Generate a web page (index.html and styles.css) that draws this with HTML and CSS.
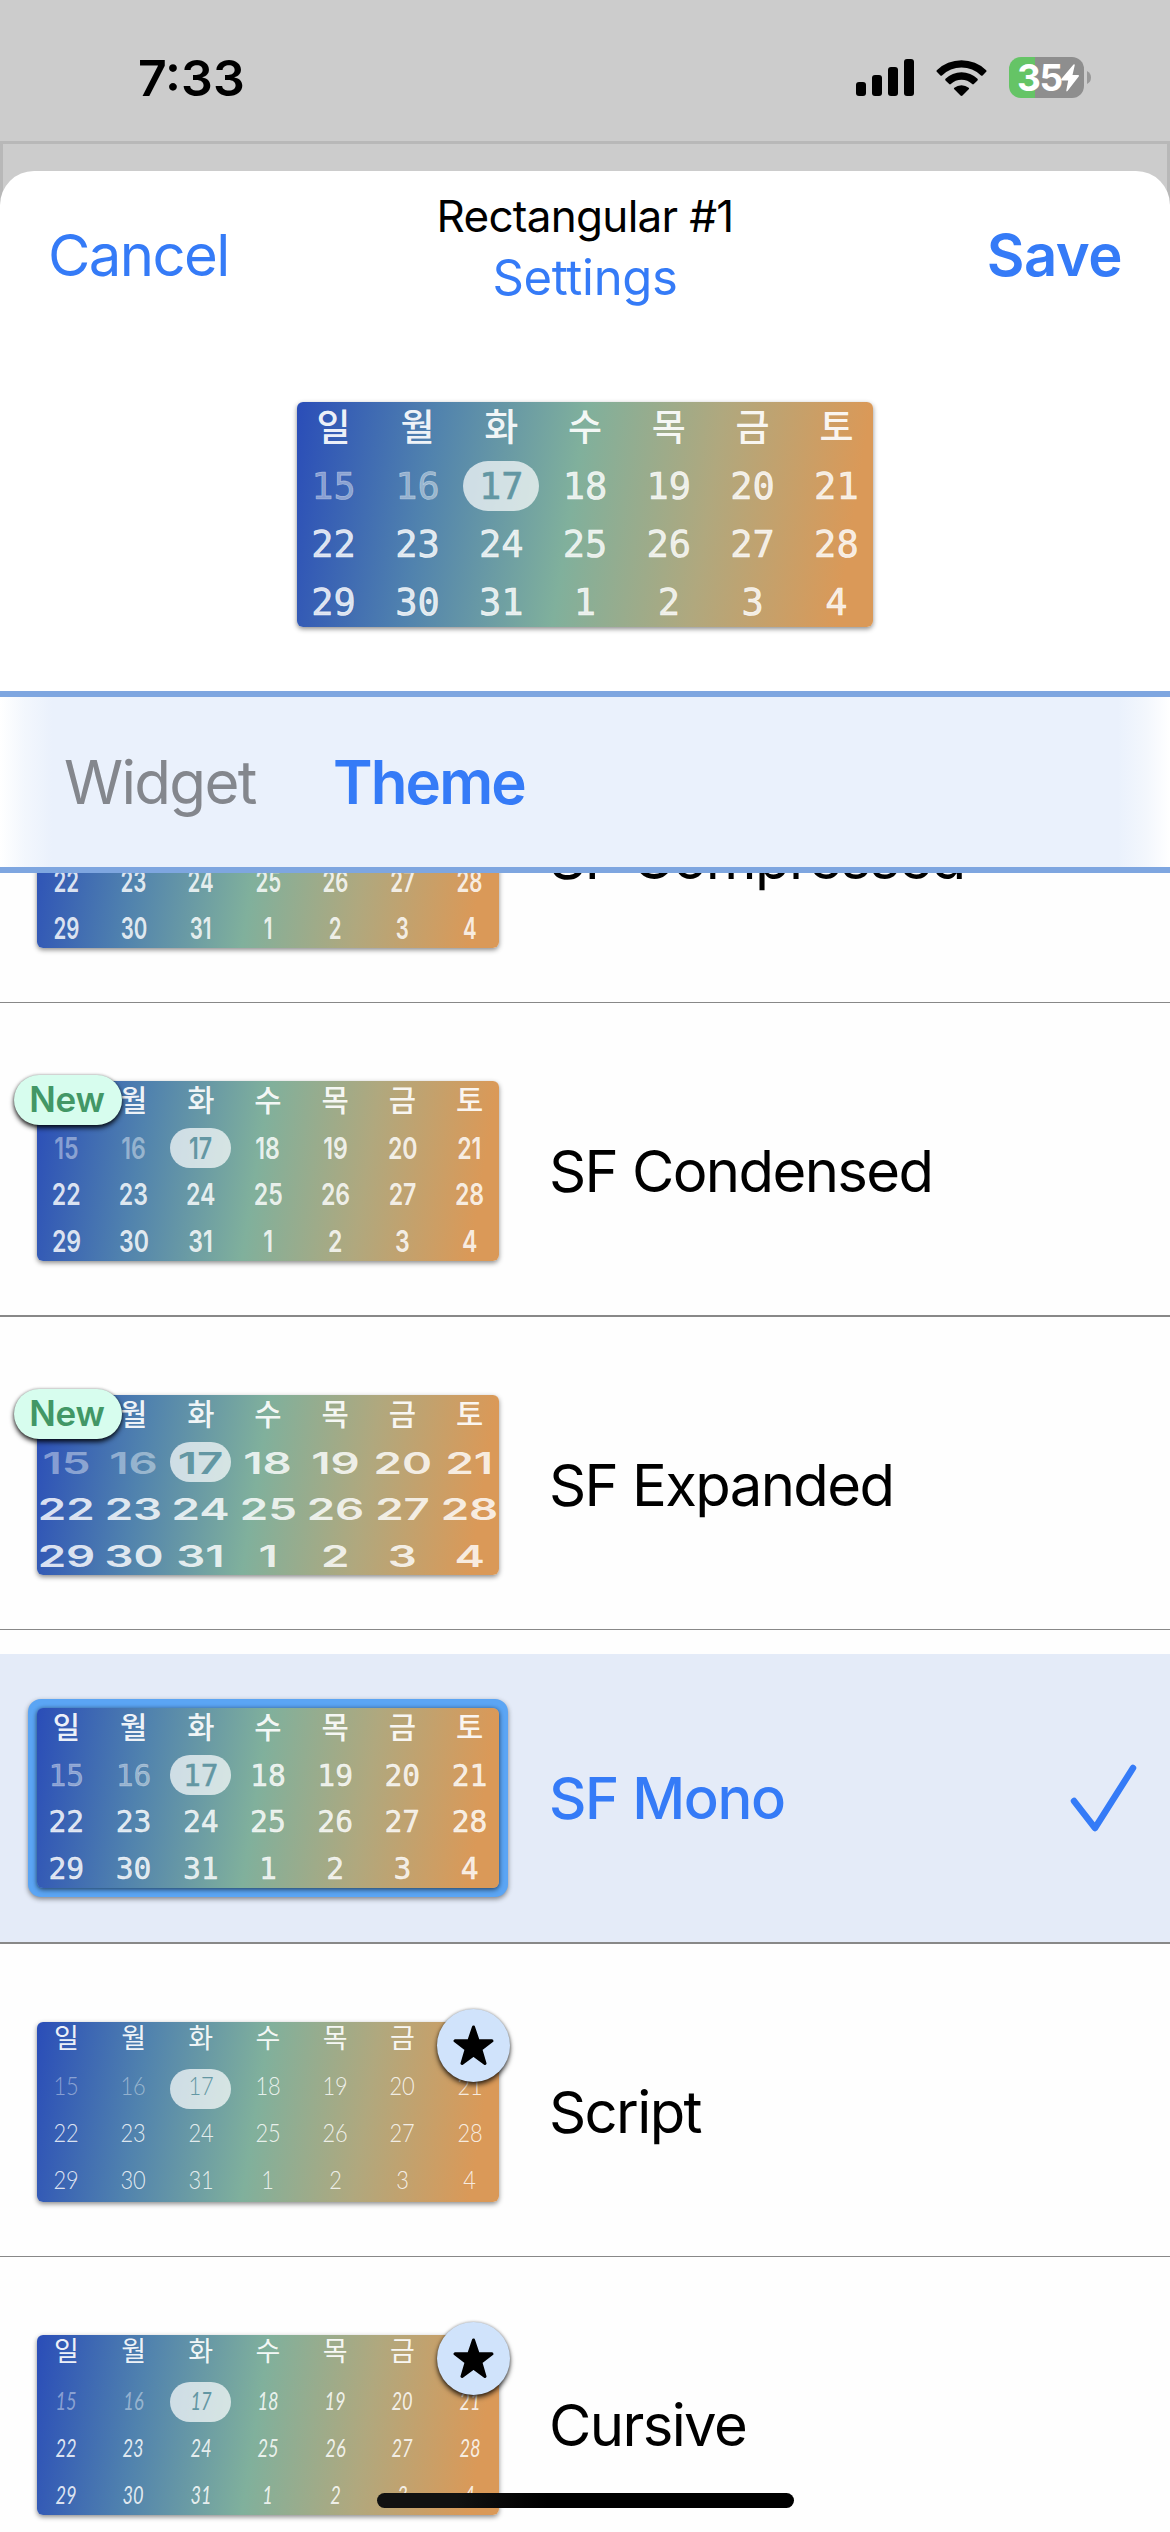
FILE: index.html
```html
<!DOCTYPE html>
<html lang="en">
<head>
<meta charset="utf-8">
<title>Rectangular #1</title>
<link rel="stylesheet" href="styles.css">
</head>
<body>
<div class="screen">
  <header class="status">
    <span class="clock">7:33</span>
    <div class="indicators">
      <svg class="signal" viewBox="0 0 58 37"><rect x="0" y="23" width="10" height="14" rx="3"/><rect x="16" y="16" width="10" height="21" rx="3"/><rect x="32" y="8" width="10" height="29" rx="3"/><rect x="48" y="0" width="10" height="37" rx="3"/></svg>
      <svg class="wifi" viewBox="0 0 51 37"><path d="M0.8 11.2a35.5 35.5 0 0 1 49.4 0q.7.8 0 1.6l-3.6 3.6q-.8.7-1.6 0a28 28 0 0 0-39 0q-.8.7-1.6 0l-3.6-3.6q-.7-.8 0-1.6z"/><path d="M9.5 19.8a23 23 0 0 1 32 0q.7.8 0 1.6l-3.7 3.7q-.8.7-1.6 0a15.500 15.500 0 0 0-21.400 0q-.8.7-1.6 0l-3.700-3.700q-.7-.8 0-1.600z"/><path d="M18.300 28.700a11.500 11.500 0 0 1 14.400 0q.8.8 0 1.600l-6.200 6.200q-1 .9-2 0l-6.200-6.200q-.8-.8 0-1.600z"/></svg>
      <div class="battery">
        <div class="battery-body"><span class="battery-level">35</span><svg class="bolt" viewBox="0 0 18 28"><path d="M12.500.5Q14-.3 13.700 1.500L11.500 11h5.500q1.600.2.7 1.600L6.500 27q-1.300 1-1.200-.6L7.200 16.500H1Q-.5 16.200.5 14.800z"/></svg></div>
        <svg class="battery-cap" viewBox="0 0 4 13"><path d="M0 0q4 2 4 6.500T0 13z"/></svg>
      </div>
    </div>
  </header>

  <div class="backdrop">
    <main class="sheet">
      <nav class="navbar">
        <a class="nav-action"><span class="cancel">Cancel</span></a>
        <div class="titles"><span class="title">Rectangular #1</span><a class="settings">Settings</a></div>
        <a class="nav-action nav-save"><span class="save">Save</span></a>
      </nav>
      <div class="preview"><div class="calendar calendar-large mono"></div></div>

      <div class="tabs"><span class="tab widget">Widget</span><span class="tab theme">Theme</span></div>

      <div class="list">
        <section class="row">
          <div class="thumb"><div class="calendar compressed"></div></div>
          <span class="name">SF Compressed</span>
        </section>
        <section class="row">
          <div class="thumb"><div class="calendar condensed"></div><span class="new">New</span></div>
          <span class="name">SF Condensed</span>
        </section>
        <section class="row">
          <div class="thumb"><div class="calendar expanded"></div><span class="new">New</span></div>
          <span class="name">SF Expanded</span>
        </section>
        <section class="row selected">
          <div class="thumb ring"><div class="calendar mono"></div></div>
          <span class="name">SF Mono</span>
          <svg class="check" viewBox="0 0 68 68"><path d="M5 37L26 64L64 4"/></svg>
        </section>
        <section class="row">
          <div class="thumb"><div class="calendar script"></div><span class="star"><svg viewBox="0 0 40 40"><path d="M20 2l4.600 13.500H38L27.200 23.800 31.200 37.500 20 29.300 8.800 37.500 12.800 23.800 2 15.500H15.400z"/></svg></span></div>
          <span class="name">Script</span>
        </section>
        <section class="row">
          <div class="thumb"><div class="calendar cursive"></div><span class="star"><svg viewBox="0 0 40 40"><path d="M20 2l4.600 13.500H38L27.200 23.800 31.200 37.500 20 29.300 8.800 37.500 12.800 23.800 2 15.500H15.400z"/></svg></span></div>
          <span class="name">Cursive</span>
        </section>
      </div>
    </main>
  </div>
  <div class="home-indicator"></div>
</div>
<script src="calendar.js"></script>
</body>
</html>
```

FILE: styles.css
```css
* { box-sizing: border-box; }
body { margin: 0; font-family: Inter, "Noto Sans CJK KR", sans-serif; color: #000; }
.screen { position: relative; width: 1170px; height: 2532px; overflow: hidden; background: #ccc; display: flex; flex-direction: column; }

/* status bar */
.status { height: 141px; flex: none; display: flex; justify-content: space-between; align-items: flex-start; padding: 57px 79px 0 138px; }
.clock { font-size: 50px; line-height: 42px; font-weight: 600; letter-spacing: 0; }
.indicators { display: flex; align-items: center; height: 41px; }
.signal { width: 58px; height: 37px; margin-right: 22px; }
.wifi { width: 51px; height: 37px; margin-right: 22px; }
.battery { display: flex; align-items: center; gap: 3px; }
.battery-body { width: 75px; height: 41px; border-radius: 12px; background: linear-gradient(90deg, #65c466 26px, #8e8e8e 26px); color: #fff; display: flex; align-items: center; padding-left: 8px; gap: 1px; }
.battery-level { font-size: 37px; line-height: 41px; font-weight: 700; letter-spacing: -1.500px; width: 43px; }
.bolt { width: 18px; height: 28px; fill: #fff; }
.battery-cap { width: 4px; height: 13px; fill: #999; }

/* sheet */
.backdrop { flex: 1; border: 3px solid #b8b8b8; border-bottom: 0; padding-top: 27px; }
.sheet { width: 1170px; height: 2361px; margin-left: -3px; background: #fff; border-radius: 34px 34px 0 0; display: flex; flex-direction: column; }
.navbar { height: 169px; flex: none; display: grid; grid-template-columns: 1fr 400px 1fr; align-items: center; padding: 0 48px; color: #357bf7; }
.nav-action { font-size: 58px; line-height: 70px; letter-spacing: -1.600px; margin-bottom: 1px; }
.nav-save { text-align: right; font-weight: 600; letter-spacing: -.5px; }
.titles { display: flex; flex-direction: column; align-items: center; margin-bottom: 18px; }
.titles > * { line-height: 61px; white-space: nowrap; }
.title { font-size: 44px; letter-spacing: -.7px; color: #000; }
.settings { font-size: 49px; letter-spacing: -.3px; }
.preview { height: 351px; flex: none; display: flex; justify-content: center; padding-top: 62px; }

/* segmented tabs */
.tabs { position: relative; z-index: 1; height: 182px; flex: none; border: solid #7ea6e0; border-width: 6px 0; display: flex; align-items: center; background: linear-gradient(90deg, #fff, #f3f7fd 24px, #eaf1fc 52px, #eaf1fc 1118px, #f3f7fd 1146px, #fff); }
.tab { font-size: 60px; line-height: 72px; }
.widget { width: 269px; margin-left: 64px; letter-spacing: -1.700px; color: #84878d; }
.theme { color: #357bf7; font-weight: 600; letter-spacing: -1.900px; }

/* theme list */
.list { flex: 1; min-height: 0; overflow: hidden; display: flex; flex-direction: column; background: #fefefe; }
.row { height: 313px; flex: none; padding: 24px 0 0 37px; border-bottom: 1px solid #888; display: flex; align-items: center; }
.row:nth-child(even) { height: 314px; border-bottom-width: 2px; }
.row:first-child { margin-top: -183px; }
.name { margin-left: 50px; font-size: 58px; line-height: 70px; letter-spacing: -1.600px; white-space: nowrap; }
.selected { background: linear-gradient(#fefefe 24px, #e4ebf8 24px); color: #357bf7; font-weight: 500; }
.check { width: 68px; height: 68px; margin-left: auto; margin-right: 33px; fill: none; stroke: #357bf7; stroke-width: 6.500px; stroke-linecap: round; stroke-linejoin: round; }
.thumb { position: relative; flex: none; }
.ring { border: 9px solid #5ba5f4; background: #5ba5f4; border-radius: 13px; margin: -9px; box-shadow: 0 2px 5px rgba(0,0,0,.45); }
.ring .calendar { box-shadow: 0 2px 5px rgba(0,0,0,.45), 0 0 4px rgba(0,0,0,.25); }
.ring + .name { letter-spacing: -1.300px; }
.new { position: absolute; left: -23px; top: -6px; width: 108px; height: 50px; border-radius: 25px; background: #d7fdee; color: #429766; font-size: 35px; line-height: 49px; font-weight: 600; letter-spacing: -.2px; padding-right: 2px; text-align: center; box-shadow: 0 3px 5px rgba(0,0,0,.85), 0 0 3px rgba(0,0,0,.3); }
.star { position: absolute; right: -11px; top: -13px; width: 73px; height: 73px; border-radius: 50%; background: #d0e3fb; display: flex; align-items: center; justify-content: center; box-shadow: 0 3px 5px rgba(0,0,0,.75), 0 0 3px rgba(0,0,0,.3); }
.star svg { width: 41px; height: 41px; stroke: #000; stroke-width: 3; stroke-linejoin: round; }

/* calendar widget */
.calendar { --u: .802px; --sx: 1; --dy: 0px; --hy: -2px; width: calc(576 * var(--u)); height: calc(225 * var(--u)); border-radius: 6px; background: linear-gradient(99deg, #2a4db8, #5082ae 23%, #80b09c 47.500%, #b0a87e 70%, #da9958 94%); box-shadow: 0 2px 5px rgba(0,0,0,.45); display: grid; grid-template-columns: repeat(7, calc(83.800 * var(--u))); grid-template-rows: calc(55.500 * var(--u)) calc(57.500 * var(--u)) calc(58.600 * var(--u)) calc(58.600 * var(--u)); justify-content: center; color: rgba(255,255,255,.84); font-size: calc(36.500 * var(--u)); font-weight: 600; }
.calendar-large { --u: 1px; }
.cell { display: flex; align-items: center; justify-content: center; }
.digits { transform: translateY(var(--dy)) scaleX(var(--sx)); }
.weekday { font-family: "Noto Sans CJK KR", sans-serif; font-size: calc(37 * var(--u)); font-weight: 500; color: rgba(255,255,255,.93); padding-bottom: calc(5 * var(--u)); line-height: 1; }
.weekday .digits { transform: translateY(var(--hy)); }
.past { color: rgba(255,255,255,.42); }
.today { display: grid; place-items: center; place-content: center; color: #6397a3; }
.today::before { content: ""; grid-area: 1 / 1; width: calc(76.500 * var(--u)); height: calc(50 * var(--u)); border-radius: calc(25 * var(--u)); background: rgba(255,255,255,.7); }
.today .digits { grid-area: 1 / 1; }
.mono { font-family: "DejaVu Sans Mono", monospace; font-size: calc(37 * var(--u)); font-weight: 400; -webkit-text-stroke: calc(.6 * var(--u)) currentColor; }
.mono .weekday { -webkit-text-stroke: 0; }
.compressed { --sx: .7; }
.condensed { --sx: .79; }
.expanded { --sx: 1.560; --dy: 1px; }
.script { --sx: .84; --dy: -4.500px; --hy: -6px; font-family: Lato, sans-serif; font-weight: 300; font-size: 26px; }
.script .weekday, .cursive .weekday { font-weight: 400; font-size: 27px; }
.cursive { --sx: .7; --dy: -2.500px; --hy: -6px; font-family: Lato, sans-serif; font-style: italic; font-weight: 400; font-size: 26px; }
.cursive .weekday { font-style: normal; }

.home-indicator { position: absolute; left: 377px; top: 2493px; width: 417px; height: 15px; border-radius: 8px; background: linear-gradient(90deg, #111 80px, #000 170px); }
```

FILE: calendar.js
```js
const weekdays = ["일", "월", "화", "수", "목", "금", "토"];
const days = [15, 16, 17, 18, 19, 20, 21, 22, 23, 24, 25, 26, 27, 28, 29, 30, 31, 1, 2, 3, 4];

function cell(text, kind) {
  return `<div class="cell ${kind}"><span class="digits">${text}</span></div>`;
}

const html =
  weekdays.map((d) => cell(d, "weekday")).join("") +
  days.map((d, i) => cell(d, i < 2 ? "past" : i === 2 ? "today" : "day")).join("");

document.querySelectorAll(".calendar").forEach((el) => { el.innerHTML = html; });
```
